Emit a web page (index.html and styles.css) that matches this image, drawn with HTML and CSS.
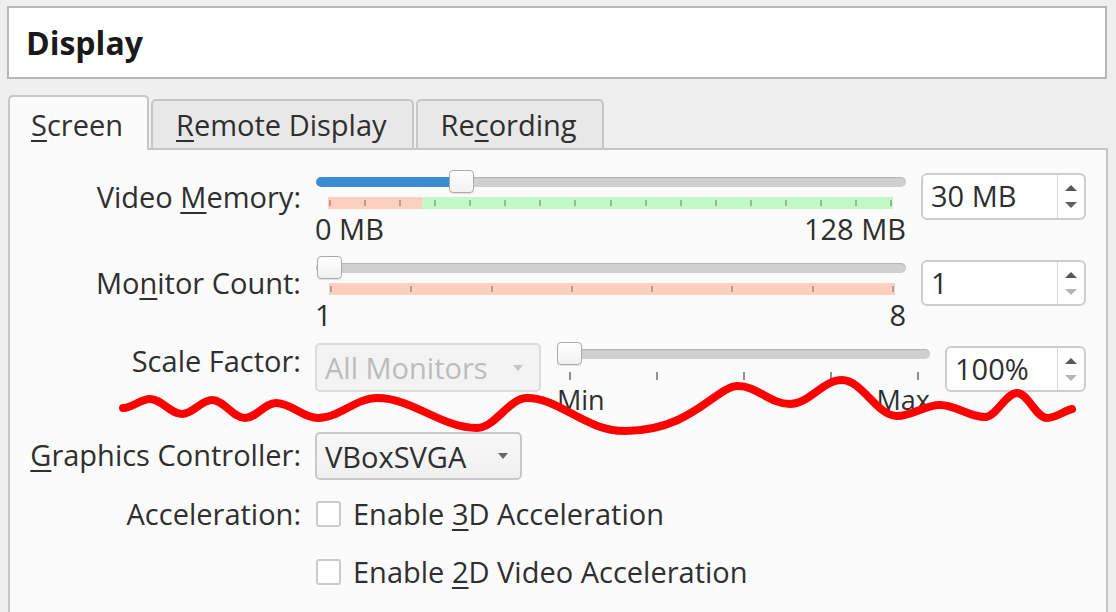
FILE: index.html
```html
<!DOCTYPE html>
<html>
<head>
<meta charset="utf-8">
<link rel="stylesheet" href="styles.css">
</head>
<body>
<div class="page">
  <div class="title-box"><h1 class="title">Display</h1></div>

  <div class="tabs">
    <div class="tab active"><u>S</u>creen</div>
    <div class="tab"><u>R</u>emote Display</div>
    <div class="tab">Re<u>c</u>ording</div>
  </div>

  <div class="pane">
    <div class="form">
      <!-- Video memory -->
      <div class="label label-vm">Video <u>M</u>emory:</div>
      <div class="field row-86">
        <div class="slider-col">
          <div class="track">
            <div class="groove"><div class="fill" style="width:144px"></div></div>
            <div class="handle" style="left:134px"></div>
          </div>
          <div class="scale-bar vm-bar">
            <i class="tick tick-red"></i><i class="tick"></i><i class="tick"></i><i class="tick"></i><i class="tick"></i><i class="tick"></i><i class="tick"></i><i class="tick"></i><i class="tick"></i><i class="tick"></i><i class="tick"></i><i class="tick"></i><i class="tick"></i><i class="tick"></i><i class="tick"></i><i class="tick"></i><i class="tick"></i>
          </div>
          <div class="scale-labels"><span>0 MB</span><span>128 MB</span></div>
        </div>
        <div class="spin spin-wide">
          <span class="spin-text">30 MB</span>
          <span class="spin-btns"><i class="arrow-up"></i><i class="arrow-down"></i></span>
        </div>
      </div>

      <!-- Monitor count -->
      <div class="label label-vm">Mo<u>n</u>itor Count:</div>
      <div class="field row-86">
        <div class="slider-col">
          <div class="track">
            <div class="groove"></div>
            <div class="handle" style="left:2px"></div>
          </div>
          <div class="scale-bar mc-bar">
            <i class="tick"></i><i class="tick"></i><i class="tick"></i><i class="tick"></i><i class="tick"></i><i class="tick"></i><i class="tick"></i><i class="tick"></i>
          </div>
          <div class="scale-labels"><span>1</span><span>8</span></div>
        </div>
        <div class="spin spin-wide spin-mc">
          <span class="spin-text">1</span>
          <span class="spin-btns"><i class="arrow-up"></i><i class="arrow-down arrow-off"></i></span>
        </div>
      </div>

      <!-- Scale factor -->
      <div class="label label-sf">Scale Factor:</div>
      <div class="field row-90">
        <div class="combo combo-disabled"><span>All Monitors</span><i class="combo-arrow"></i></div>
        <div class="slider-small">
          <div class="track">
            <div class="groove"></div>
            <div class="handle" style="left:0"></div>
          </div>
          <div class="ticks-row"><i class="tick-g"></i><i class="tick-g"></i><i class="tick-g"></i><i class="tick-g"></i><i class="tick-g"></i></div>
          <div class="minmax"><span>Min</span><span>Max</span></div>
        </div>
        <div class="spin spin-narrow">
          <span class="spin-text">100%</span>
          <span class="spin-btns"><i class="arrow-up"></i><i class="arrow-down arrow-off"></i></span>
        </div>
      </div>

      <!-- Graphics controller -->
      <div class="label label-gc"><u>G</u>raphics Controller:</div>
      <div class="field row-65">
        <div class="combo combo-vbox"><span>VBoxSVGA</span><i class="combo-arrow"></i></div>
      </div>

      <!-- Acceleration -->
      <div class="label">Acceleration:</div>
      <div class="field field-check row-58">
        <span class="check"></span><span>Enable <u>3</u>D Acceleration</span>
      </div>

      <div class="label"></div>
      <div class="field field-check">
        <span class="check"></span><span>Enable <u>2</u>D Video Acceleration</span>
      </div>
    </div>
  </div>

  <svg class="scribble" viewBox="0 0 1116 612" width="1116" height="612">
    <path d="M123 408 C132.7 408 140.3 399 150 399 C161.5 399 170.5 414 182 414 C192.8 414 201.2 400 212 400 C223.9 400 233.1 418 245 418 C256.2 418 264.8 403 276 403 C291.1 403 302.9 418 318 418 C339.2 418 355.8 398 377 398 C413 398 441 428 477 428 C495 428 509 398 527 398 C560 398 585 431 625 431 C692 431 716 386 738 386 C757 386 770 404 790 404 C809 404 823 380 842 380 C862 380 877 416 897 416 C912 416 925 405 940 405 C956 405 969 417 985 417 C996.5 417 1005.5 393 1017 393 C1028 393 1036 418 1047 418 C1056 418 1064 411 1072 409" fill="none" stroke="#ff0000" stroke-width="8" stroke-linecap="round" stroke-linejoin="round"/>
  </svg>
</div>
</body>
</html>
```

FILE: styles.css
```css
html, body {
  margin: 0;
  padding: 0;
}

body {
  background: #efefef;
  font-family: "Open Sans", "Noto Sans", sans-serif;
  font-size: 29px;
  font-weight: 500;
  color: #2f2f2f;
}

.page {
  position: relative;
  width: 1116px;
  height: 612px;
  box-sizing: border-box;
  padding: 6px 8px 0;
  overflow: hidden;
}

u {
  text-decoration-thickness: 2px;
  text-underline-offset: 4px;
}

/* Title */
.title-box {
  height: 73px;
  box-sizing: border-box;
  margin: 0 1px 0 -1px;
  border: 2px solid #b7b7b7;
  background: #ffffff;
  padding: 15px 17px 0;
}

.title {
  margin: 0;
  font-size: 32px;
  font-weight: 700;
  line-height: 40px;
  color: #1a1a1a;
}

/* Tabs */
.tabs {
  display: flex;
  align-items: flex-end;
  margin-top: 16px;
  margin-bottom: -2px;
  position: relative;
  z-index: 1;
}

.tab {
  box-sizing: border-box;
  height: 51px;
  padding: 6.5px 25px 0 23px;
  border: 2px solid #c6c6c6;
  border-radius: 5px 5px 0 0;
  background: #e8e8e8;
  line-height: 34px;
  margin-right: 2px;
  white-space: nowrap;
}

.tab.active {
  height: 55px;
  padding-top: 10.5px;
  padding-left: 21px;
  padding-right: 24px;
  border-bottom: none;
  background: #fbfbfb;
}

/* Pane */
.pane {
  border: 2px solid #c6c6c6;
  background: #fbfbfb;
  height: 520px;
}

.form {
  display: grid;
  grid-template-columns: 291px 771px;
  column-gap: 14px;
  padding-top: 20px;
  align-items: start;
}

.label {
  text-align: right;
  line-height: 34px;
  white-space: nowrap;
}

.label-vm { margin-top: 10px; }
.label-sf { margin-top: 2px; }
.label-gc { margin-top: 6px; }

.field {
  display: flex;
  align-items: flex-start;
}

.row-86 { height: 86px; }
.row-90 { height: 90px; }
.row-65 { height: 65px; }
.row-58 { margin-bottom: 24px; }

/* Sliders */
.slider-col {
  width: 591px;
  flex: none;
}

.track {
  position: relative;
  height: 24px;
  box-sizing: border-box;
  padding: 7px 0 0 1px;
}

.groove {
  height: 10px;
  border-radius: 5px;
  background: #d0d0d0;
  box-shadow: inset 0 1px 1px rgba(0, 0, 0, 0.14);
  overflow: hidden;
}

.fill {
  height: 100%;
  background: #3a8dd2;
  border-radius: 5px 0 0 5px;
}

.handle {
  position: absolute;
  top: 0;
  width: 25px;
  height: 23px;
  box-sizing: border-box;
  border: 1px solid #ababab;
  border-radius: 4px;
  background: linear-gradient(#ffffff, #f1f1f1);
  box-shadow: 0 1px 1px rgba(0, 0, 0, 0.1);
}

.scale-bar {
  height: 12px;
  margin-top: 3px;
  display: flex;
  justify-content: space-between;
  align-items: center;
  padding: 0 1px;
}

.vm-bar {
  margin-left: 13px;
  margin-right: 13px;
  background: linear-gradient(to right, #fdcfbf 0, #fdcfbf 94px, #c4f8c4 94px, #c4f8c4 100%);
}

.mc-bar {
  margin-left: 14px;
  margin-right: 11px;
  background: #fdcfbf;
}

.tick {
  width: 2px;
  height: 6px;
  background: rgba(0, 0, 0, 0.25);
}

.tick-red {
  background: #e08a8a;
}

.scale-labels {
  display: flex;
  justify-content: space-between;
  margin-top: 2.5px;
  line-height: 34px;
}

/* Scale factor slider */
.slider-small {
  width: 373px;
  flex: none;
  margin-left: 16px;
}

.ticks-row {
  display: flex;
  justify-content: space-between;
  padding: 0 11.5px;
  margin-top: 6px;
  height: 8px;
}

.tick-g {
  width: 2px;
  height: 8px;
  background: #8f8f8f;
}

.minmax {
  display: flex;
  justify-content: space-between;
  font-size: 27px;
  line-height: 30px;
  margin-top: 5px;
}

/* Spinbox */
.spin {
  box-sizing: border-box;
  display: flex;
  height: 47px;
  border: 2px solid #cdcdcd;
  border-radius: 6px;
  background: #ffffff;
  margin-left: 15px;
  margin-top: 3px;
  flex: none;
}

.spin-wide { width: 165px; }
.spin-mc { margin-top: 4px; height: 46px; }
.spin-narrow { width: 141px; margin-top: 4px; height: 46px; }

.spin-text {
  flex: 1;
  padding-left: 8px;
  line-height: 42px;
}

.spin-btns {
  width: 26px;
  border-left: 1px solid #d8d8d8;
  display: flex;
  flex-direction: column;
  align-items: center;
  justify-content: center;
  gap: 11px;
}

.arrow-up {
  width: 0;
  height: 0;
  border-left: 6.5px solid transparent;
  border-right: 6.5px solid transparent;
  border-bottom: 6px solid #575757;
}

.arrow-down {
  width: 0;
  height: 0;
  border-left: 6.5px solid transparent;
  border-right: 6.5px solid transparent;
  border-top: 6px solid #606060;
}

.arrow-down.arrow-off {
  border-top-color: #b5b5b5;
}

/* Combo */
.combo {
  box-sizing: border-box;
  display: flex;
  align-items: center;
  justify-content: space-between;
  height: 48px;
  border: 2px solid #c9c9c9;
  border-radius: 5px;
  background: linear-gradient(#f8f8f8, #f0f0f0);
  padding: 0 12px 0 8px;
  flex: none;
  white-space: nowrap;
}

.combo-arrow {
  width: 0;
  height: 0;
  border-left: 5.5px solid transparent;
  border-right: 5.5px solid transparent;
  border-top: 6px solid #6a6a6a;
}

.combo-disabled {
  width: 226px;
  height: 49px;
  margin-top: 1px;
  border-color: #dcdcdc;
  background: #f3f3f3;
  color: #bcbcbc;
  padding-right: 16px;
}

.combo-disabled .combo-arrow {
  border-top-color: #c6c6c6;
}

.combo-vbox {
  width: 207px;
}

/* Checkboxes */
.field-check {
  align-items: center;
  line-height: 34px;
  white-space: nowrap;
}

.check {
  box-sizing: border-box;
  width: 25px;
  height: 26px;
  border: 2px solid #cbcbcb;
  border-radius: 3px;
  background: #ffffff;
  margin-left: 1px;
  margin-right: 12px;
  flex: none;
}

/* Annotation scribble */
.scribble {
  position: absolute;
  left: 0;
  top: 0;
  pointer-events: none;
}
```
